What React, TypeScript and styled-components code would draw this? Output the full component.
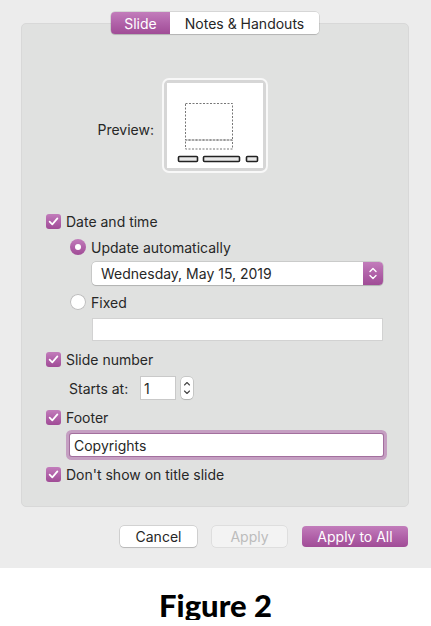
import React from "react";
import styled, { createGlobalStyle, css } from "styled-components";

const GlobalStyle = createGlobalStyle`
  html, body { margin: 0; padding: 0; background: #ffffff; }
  body { font-family: Inter, "Liberation Sans", Arial, sans-serif; color: #272727; }
  * { box-sizing: border-box; }
`;

const purple = css`
  background: linear-gradient(180deg, #c27dbb 0%, #b162a9 50%, #a04c96 100%);
`;

const Window = styled.div`
  width: 431px;
  height: 568px;
  background: #ececec;
  padding: 23px 22px 0 21px;
  display: flex;
  flex-direction: column;
`;

const Panel = styled.div`
  height: 484px;
  background: #e0e1e0;
  border: 1px solid #d8d8d8;
  border-radius: 5px;
  display: flex;
  flex-direction: column;
`;

const TabBar = styled.div`
  align-self: center;
  margin-top: -12px;
  display: flex;
  height: 22px;
  border-radius: 4px;
  box-shadow: 0 0 0 0.5px rgba(0, 0, 0, 0.18), 0 1px 1px rgba(0, 0, 0, 0.12);
  overflow: hidden;
`;

const Tab = styled.div<{ $active?: boolean; $w: number }>`
  width: ${(p) => p.$w}px;
  height: 22px;
  display: flex;
  align-items: center;
  justify-content: center;
  font-size: 14px;
  ${(p) =>
    p.$active
      ? css`
          ${purple};
          color: #fff;
        `
      : css`
          background: #fff;
          color: #262626;
        `}
`;

const PreviewRow = styled.div`
  display: grid;
  grid-template-columns: 132px 106px;
  column-gap: 8px;
  align-items: center;
  margin-top: 44px;
`;

const PreviewLabel = styled.div`
  text-align: right;
  font-size: 14px;
  padding-top: 7px;
`;

const PreviewFrame = styled.div`
  width: 106px;
  height: 95px;
  border-radius: 7px;
  border: 2px solid #f8f8f8;
  background: #d6d6d6;
  padding: 3px;
  display: flex;
`;

const Content = styled.div`
  display: flex;
  flex-direction: column;
  padding-left: 24px;
`;

const OptionRow = styled.label<{ $indent?: number; $mt: number }>`
  display: flex;
  align-items: center;
  gap: 5px;
  height: 20px;
  margin-left: ${(p) => p.$indent ?? 0}px;
  margin-top: ${(p) => p.$mt}px;
  font-size: 14px;
  color: #272727;
`;

const CheckBox = styled.span`
  width: 15px;
  height: 15px;
  border-radius: 3px;
  ${purple};
  display: flex;
  align-items: center;
  justify-content: center;
  flex: none;
`;

const Radio = styled.span<{ $on?: boolean }>`
  width: 16px;
  height: 16px;
  border-radius: 50%;
  flex: none;
  display: flex;
  align-items: center;
  justify-content: center;
  ${(p) =>
    p.$on
      ? css`
          ${purple};
        `
      : css`
          background: #fff;
          box-shadow: inset 0 0 0 1px #bdbdbd;
        `}
`;

const Dot = styled.span`
  width: 6px;
  height: 6px;
  border-radius: 50%;
  background: #fff;
`;

const SelectBox = styled.div`
  margin-left: 46px;
  margin-top: 5px;
  width: 291px;
  height: 23px;
  background: #fff;
  border-radius: 4px;
  box-shadow: 0 0 0 0.5px rgba(0, 0, 0, 0.2), 0 1px 1px rgba(0, 0, 0, 0.12);
  display: flex;
  align-items: center;
  font-size: 14px;
  overflow: hidden;
`;

const SelectText = styled.span`
  flex: 1;
  padding-left: 9px;
`;

const SelectArrow = styled.span`
  width: 20px;
  height: 23px;
  ${purple};
  display: flex;
  align-items: center;
  justify-content: center;
`;

const TextField = styled.div<{ $mt: number }>`
  margin-left: 46px;
  margin-top: ${(p) => p.$mt}px;
  width: 291px;
  height: 23px;
  background: #fff;
  border: 1px solid #d2d2d2;
`;

const StartsRow = styled.div`
  display: flex;
  align-items: center;
  margin-left: 23px;
  margin-top: 7px;
  height: 24px;
  font-size: 14px;
`;

const StartsLabel = styled.span`
  width: 71px;
`;

const NumberField = styled.div`
  width: 36px;
  height: 24px;
  background: #fff;
  border: 1px solid #c9c9c9;
  display: flex;
  align-items: center;
  padding-left: 3px;
  font-size: 14px;
`;

const Stepper = styled.div`
  margin-left: 5px;
  width: 12px;
  height: 22px;
  background: #fff;
  border-radius: 4px;
  box-shadow: 0 0 0 0.5px rgba(0, 0, 0, 0.22), 0 1px 1px rgba(0, 0, 0, 0.1);
  display: flex;
`;

const FooterField = styled.div`
  margin-left: 24px;
  margin-top: 7px;
  width: 313px;
  height: 22px;
  background: #fff;
  border-radius: 2px;
  box-shadow: 0 0 0 1px #a36f9e, 0 0 0 4px #c59fc2;
  display: flex;
  align-items: center;
  padding-left: 4px;
  font-size: 14px;
`;

const ButtonRow = styled.div`
  display: flex;
  justify-content: flex-end;
  gap: 15px;
  margin-top: 19px;
  margin-right: 1px;
`;

const Button = styled.div<{ $w: number; $kind?: "primary" | "disabled" }>`
  width: ${(p) => p.$w}px;
  height: 21px;
  border-radius: 4px;
  display: flex;
  align-items: center;
  justify-content: center;
  font-size: 14px;
  ${(p) =>
    p.$kind === "primary"
      ? css`
          ${purple};
          color: #fff;
        `
      : p.$kind === "disabled"
      ? css`
          background: #f3f3f3;
          color: #bcbcbc;
          box-shadow: 0 0 0 0.5px rgba(0, 0, 0, 0.12);
        `
      : css`
          background: #fff;
          color: #262626;
          box-shadow: 0 0 0 0.5px rgba(0, 0, 0, 0.22), 0 1px 1px rgba(0, 0, 0, 0.12);
        `}
`;

const Caption = styled.div`
  text-align: center;
  padding-top: 22px;
  font-family: Lato, "Liberation Sans", Arial, sans-serif;
  font-weight: 900;
  font-size: 31px;
  line-height: 30px;
  color: #000;
`;

const Check = () => (
  <svg width="15" height="15" viewBox="0 0 15 15">
    <path d="M3.6 7.6 L6.3 10.4 L11.4 4.4" fill="none" stroke="#fff" strokeWidth="1.7" strokeLinecap="round" strokeLinejoin="round" />
  </svg>
);

const PreviewArt = () => (
  <svg width="96" height="85" viewBox="0 0 96 85">
    <rect x="0" y="0" width="96" height="85" fill="#fff" />
    <rect x="18.5" y="20.5" width="47" height="36.5" fill="none" stroke="#777" strokeWidth="1" strokeDasharray="2 1.5" />
    <rect x="18.5" y="57" width="47" height="9" fill="none" stroke="#777" strokeWidth="1" strokeDasharray="2 1.5" />
    <rect x="11.5" y="73.5" width="19" height="5" rx="1" fill="#e8e8e8" stroke="#222" strokeWidth="1.6" />
    <rect x="36.5" y="73.5" width="36" height="5" rx="1" fill="#e8e8e8" stroke="#222" strokeWidth="1.6" />
    <rect x="79.5" y="73.5" width="11" height="5" rx="1" fill="#e8e8e8" stroke="#222" strokeWidth="1.6" />
  </svg>
);

const SelectChevrons = () => (
  <svg width="20" height="23" viewBox="0 0 20 23">
    <path d="M7 9.5 L10 6.5 L13 9.5 M7 13.5 L10 16.5 L13 13.5" fill="none" stroke="#fff" strokeWidth="1.4" strokeLinecap="round" strokeLinejoin="round" />
  </svg>
);

const StepChevrons = () => (
  <svg width="12" height="22" viewBox="0 0 12 22">
    <path d="M3.5 8 L6 5.5 L8.5 8 M3.5 14 L6 16.5 L8.5 14" fill="none" stroke="#444" strokeWidth="1.1" strokeLinecap="round" strokeLinejoin="round" />
  </svg>
);

export default function App() {
  return (
    <>
      <GlobalStyle />
      <Window>
        <Panel>
          <TabBar>
            <Tab $active $w={59}>Slide</Tab>
            <Tab $w={149}>Notes &amp; Handouts</Tab>
          </TabBar>
          <PreviewRow>
            <PreviewLabel>Preview:</PreviewLabel>
            <PreviewFrame>
              <PreviewArt />
            </PreviewFrame>
          </PreviewRow>
          <Content>
            <OptionRow $mt={38}>
              <CheckBox><Check /></CheckBox>
              Date and time
            </OptionRow>
            <OptionRow $indent={24} $mt={6}>
              <Radio $on><Dot /></Radio>
              Update automatically
            </OptionRow>
            <SelectBox>
              <SelectText>Wednesday, May 15, 2019</SelectText>
              <SelectArrow><SelectChevrons /></SelectArrow>
            </SelectBox>
            <OptionRow $indent={24} $mt={7}>
              <Radio />
              Fixed
            </OptionRow>
            <TextField $mt={6} />
            <OptionRow $mt={8}>
              <CheckBox><Check /></CheckBox>
              Slide number
            </OptionRow>
            <StartsRow>
              <StartsLabel>Starts at:</StartsLabel>
              <NumberField>1</NumberField>
              <Stepper><StepChevrons /></Stepper>
            </StartsRow>
            <OptionRow $mt={7}>
              <CheckBox><Check /></CheckBox>
              Footer
            </OptionRow>
            <FooterField>Copyrights</FooterField>
            <OptionRow $mt={8}>
              <CheckBox><Check /></CheckBox>
              Don't show on title slide
            </OptionRow>
          </Content>
        </Panel>
        <ButtonRow>
          <Button $w={77}>Cancel</Button>
          <Button $w={75} $kind="disabled">Apply</Button>
          <Button $w={106} $kind="primary">Apply to All</Button>
        </ButtonRow>
      </Window>
      <Caption>Figure 2</Caption>
    </>
  );
}
